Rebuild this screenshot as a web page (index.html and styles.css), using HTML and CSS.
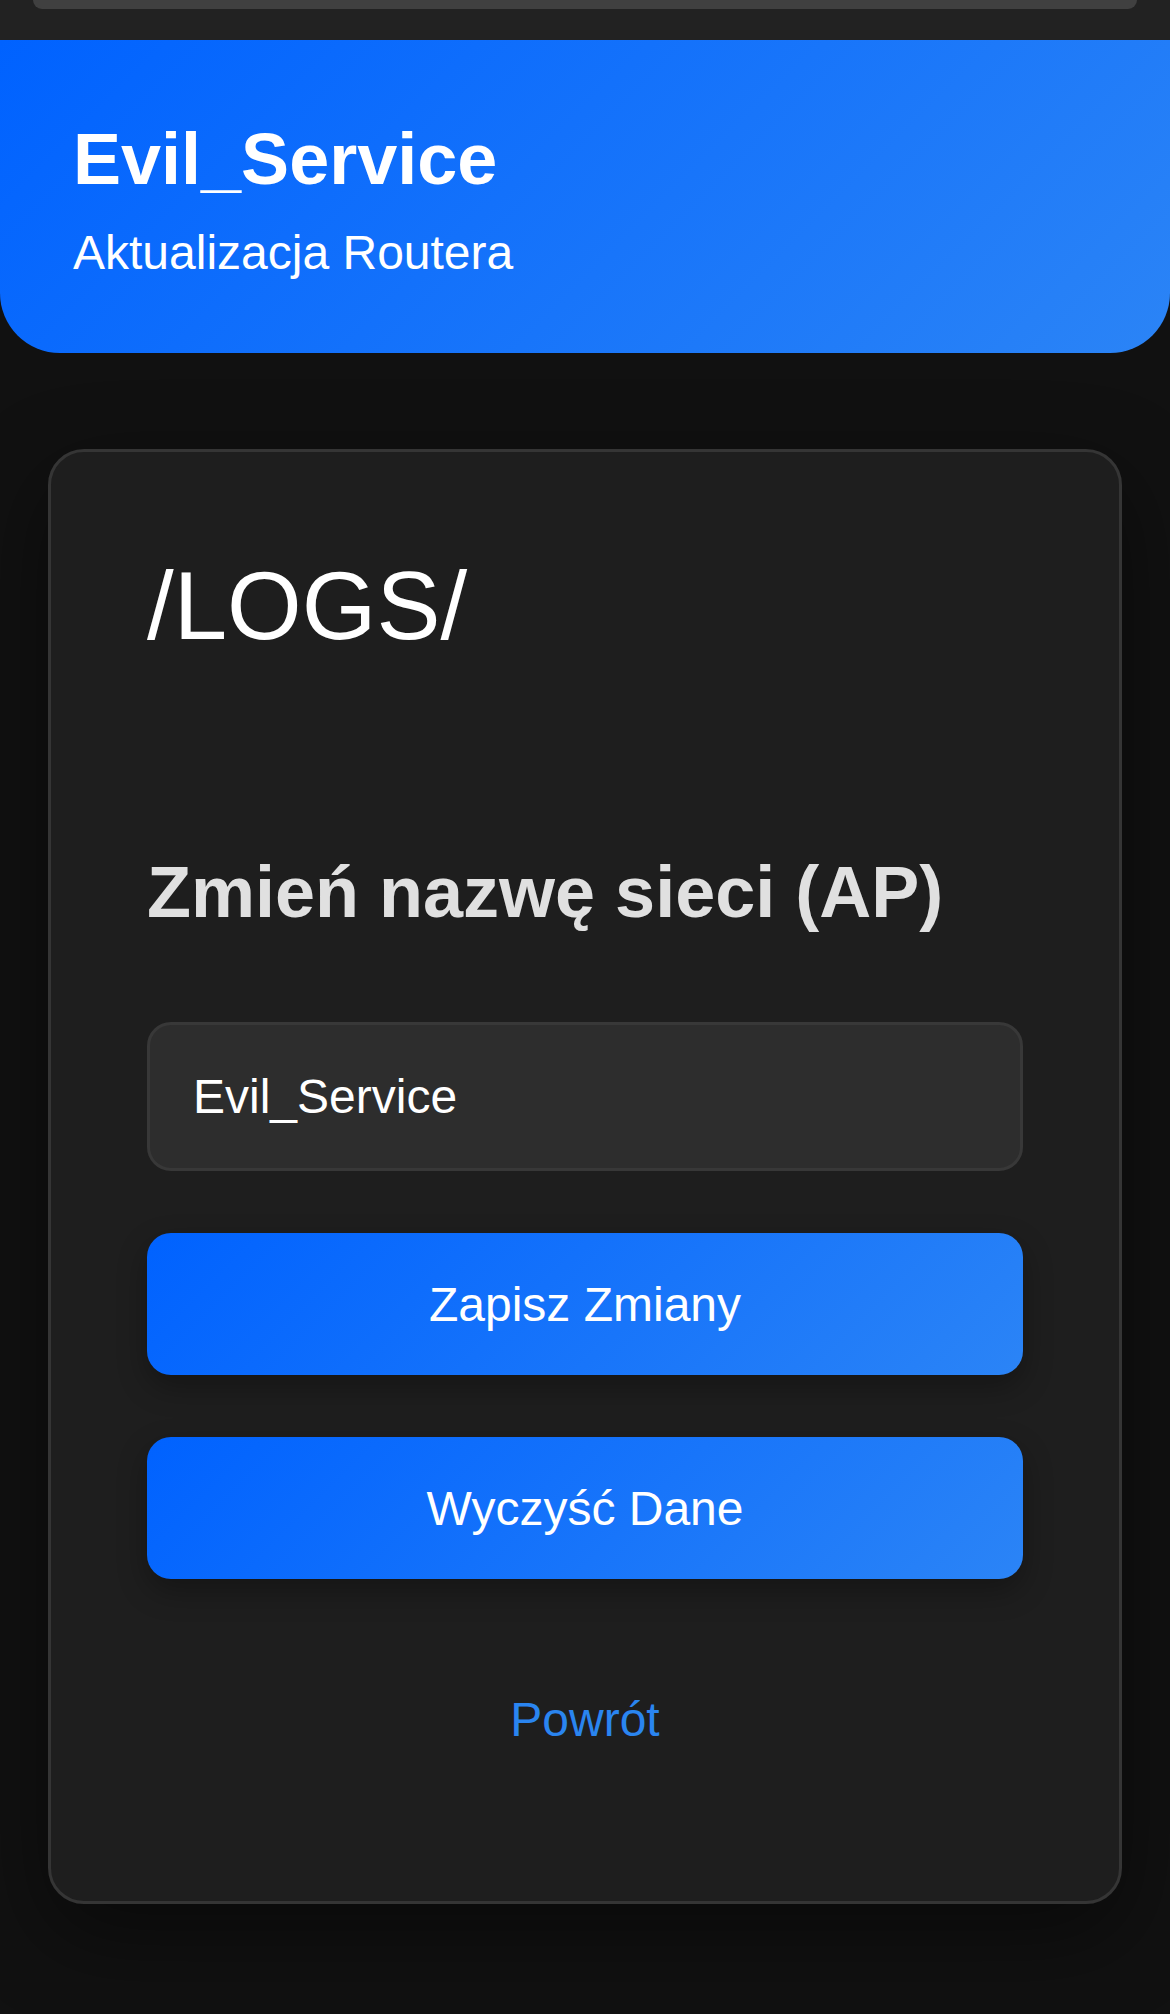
FILE: index.html
```html
<!DOCTYPE html>
<html lang="pl">
<head>
<meta charset="utf-8">
<title>Evil_Service</title>
<link rel="stylesheet" href="styles.css">
</head>
<body>
<div class="topbar"><div class="topbar-pill"></div></div>
<header class="header">
  <h1 class="brand">Evil_Service</h1>
  <p class="subtitle">Aktualizacja Routera</p>
</header>
<main class="card">
  <h1 class="path">/LOGS/</h1>
  <h2 class="section-title">Zmień nazwę sieci (AP)</h2>
  <form class="form">
    <input class="field" type="text" value="Evil_Service">
    <button class="btn" type="button">Zapisz Zmiany</button>
    <button class="btn" type="button">Wyczyść Dane</button>
  </form>
  <a class="back" href="#">Powrót</a>
</main>
</body>
</html>
```
FILE: styles.css
```css
* { box-sizing: border-box; }
html, body {
  margin: 0;
  padding: 0;
  background: #111111;
  font-family: "Liberation Sans", Arial, Helvetica, sans-serif;
  color: #ffffff;
}
body { min-height: 2014px; }
.topbar {
  height: 40px;
  background: #222222;
  padding: 0 33px;
}
.topbar-pill {
  height: 9px;
  background: #404040;
  border-radius: 0 0 12px 12px;
}
.header {
  background: linear-gradient(135deg, #0062ff 0%, #2b84f6 100%);
  border-radius: 0 0 60px 60px;
  padding: 78px 73px 73px;
}
.brand {
  margin: 0 0 24px;
  font-size: 72px;
  line-height: 1.15;
  font-weight: 700;
}
.subtitle {
  margin: 0;
  font-size: 48px;
  line-height: 1.15;
}
.card {
  margin: 96px 48px 0;
  background: #1e1e1e;
  border: 3px solid #353535;
  border-radius: 36px;
  padding: 99px 96px 154px;
  box-shadow: 0 30px 90px rgba(0, 0, 0, 0.45);
  display: flex;
  flex-direction: column;
}
.path {
  margin: 0;
  font-size: 96px;
  line-height: 1.15;
  font-weight: 400;
  color: #ffffff;
}
.section-title {
  margin: 190px 0 0;
  font-size: 72px;
  line-height: 1.15;
  font-weight: 700;
  color: #e0e0e0;
}
.form {
  margin-top: 88px;
  display: flex;
  flex-direction: column;
  gap: 62px;
}
.field {
  height: 149px;
  width: 100%;
  background: #2d2d2d;
  border: 3px solid #383838;
  border-radius: 24px;
  padding: 0 43px;
  font-family: inherit;
  font-size: 48px;
  color: #ffffff;
  outline: none;
}
.btn {
  height: 142px;
  width: 100%;
  border: 0;
  border-radius: 24px;
  background: linear-gradient(135deg, #0062ff 0%, #2b84f6 100%);
  color: #ffffff;
  font-family: inherit;
  font-size: 48px;
  box-shadow: 0 12px 30px rgba(0, 0, 0, 0.3);
}
.back {
  margin-top: 113px;
  align-self: center;
  font-size: 48px;
  line-height: 1.15;
  color: #2a85f0;
  text-decoration: none;
}
```
